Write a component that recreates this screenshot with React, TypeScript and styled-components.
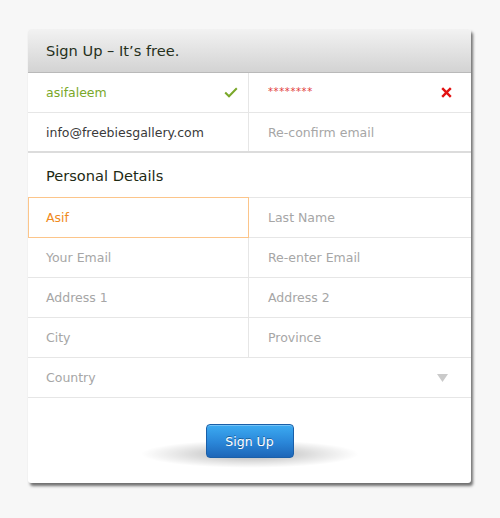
import React from 'react';
import styled, { createGlobalStyle } from 'styled-components';

const GlobalStyle = createGlobalStyle`
  html, body {
    margin: 0;
    padding: 0;
    background: #f7f7f7;
  }
  body {
    font-family: 'DejaVu Sans', 'Liberation Sans', sans-serif;
  }
`;

const Page = styled.div`
  padding: 29px 0 0 28px;
  height: 518px;
  box-sizing: border-box;
`;

const Card = styled.div`
  width: 443px;
  background: #fff;
  border-radius: 3px;
  box-shadow: 2px 3px 3px rgba(0, 0, 0, 0.55);
  overflow: hidden;
`;

const Header = styled.div`
  height: 43px;
  display: flex;
  align-items: center;
  padding-left: 18px;
  background: linear-gradient(#f2f2f2, #d3d3d3);
  border-bottom: 1px solid #b9b9b9;
  font-size: 14.6px;
  color: #26301c;
`;

const Row = styled.div<{ $thick?: boolean }>`
  display: grid;
  grid-template-columns: 221px 1fr;
  height: ${(p) => (p.$thick ? '38px' : '39px')};
  border-bottom: ${(p) => (p.$thick ? '2px solid #dcdcdc' : '1px solid #e6e6e6')};
`;

type Tone = 'green' | 'dark' | 'orange' | 'red' | 'muted';

const toneColor: Record<Tone, string> = {
  green: '#7aa82a',
  dark: '#3a3a3a',
  orange: '#f08a1c',
  red: '#e23a3a',
  muted: '#a6a6a6',
};

const Cell = styled.div<{ $tone?: Tone; $wide?: boolean }>`
  position: relative;
  display: flex;
  align-items: center;
  justify-content: space-between;
  padding: 0 10px 0 18px;
  font-size: 12.5px;
  grid-column: ${(p) => (p.$wide ? '1 / 3' : 'auto')};
  border-right: 1px solid #e6e6e6;
  box-sizing: border-box;
  color: ${(p) => toneColor[p.$tone ?? 'muted']};
  &:last-child {
    border-right: none;
    padding: ${(p) => (p.$wide ? '0 23px 0 18px' : '0 19px 0 19px')};
  }
`;

const FocusCell = styled(Cell)`
  z-index: 1;
  margin: -1px 0;
  padding-left: 17px;
  border: 1px solid #fcc58a;
`;

const Section = styled.div`
  height: 44px;
  display: flex;
  align-items: center;
  padding-left: 18px;
  font-size: 14.6px;
  color: #1e2a14;
  border-bottom: 1px solid #e6e6e6;
`;

const Stars = styled.span`
  font-size: 10px;
  letter-spacing: 0.6px;
  margin-top: -3px;
`;

const Footer = styled.div`
  height: 85px;
  display: flex;
  justify-content: center;
  padding-top: 26px;
  box-sizing: border-box;
`;

const ButtonWrap = styled.div`
  position: relative;
  &::before {
    content: '';
    position: absolute;
    left: -66px;
    right: -66px;
    top: 16px;
    height: 28px;
    border-radius: 50%;
    background: radial-gradient(
      ellipse at center,
      rgba(0, 0, 0, 0.3) 0%,
      rgba(0, 0, 0, 0.1) 45%,
      rgba(0, 0, 0, 0) 70%
    );
  }
`;

const Button = styled.button`
  position: relative;
  width: 88px;
  height: 34px;
  border: 1px solid #1a5fa8;
  border-radius: 4px;
  background: linear-gradient(#3cabf2, #2a86d8 55%, #1d66b8);
  color: #fff;
  font-family: 'DejaVu Sans', 'Liberation Sans', sans-serif;
  font-size: 12.5px;
  text-shadow: 0 -1px 0 rgba(0, 0, 0, 0.35);
  box-shadow: inset 0 1px 0 rgba(255, 255, 255, 0.3);
  cursor: pointer;
`;

const Check = () => (
  <svg width="14" height="11" viewBox="0 0 14 11">
    <path d="M1.2 5.5 L5 9.3 L12.8 1.2" fill="none" stroke="#7aa82a" strokeWidth="2" />
  </svg>
);

const Cross = () => (
  <svg width="11" height="11" viewBox="0 0 11 11">
    <path d="M1.2 1.2 L9.8 9.8 M9.8 1.2 L1.2 9.8" stroke="#e21212" strokeWidth="2.4" />
  </svg>
);

const Arrow = () => (
  <svg width="11" height="8" viewBox="0 0 11 8">
    <path d="M0 0 H11 L5.5 8 Z" fill="#cacaca" />
  </svg>
);

export default function App() {
  return (
    <Page>
      <GlobalStyle />
      <Card>
        <Header>Sign Up – It’s free.</Header>
        <Row>
          <Cell $tone="green">
            asifaleem
            <Check />
          </Cell>
          <Cell $tone="red">
            <Stars>********</Stars>
            <Cross />
          </Cell>
        </Row>
        <Row $thick>
          <Cell $tone="dark">info@freebiesgallery.com</Cell>
          <Cell>Re-confirm email</Cell>
        </Row>
        <Section>Personal Details</Section>
        <Row>
          <FocusCell $tone="orange">Asif</FocusCell>
          <Cell>Last Name</Cell>
        </Row>
        <Row>
          <Cell>Your Email</Cell>
          <Cell>Re-enter Email</Cell>
        </Row>
        <Row>
          <Cell>Address 1</Cell>
          <Cell>Address 2</Cell>
        </Row>
        <Row>
          <Cell>City</Cell>
          <Cell>Province</Cell>
        </Row>
        <Row>
          <Cell $wide>
            Country
            <Arrow />
          </Cell>
        </Row>
        <Footer>
          <ButtonWrap>
            <Button>Sign Up</Button>
          </ButtonWrap>
        </Footer>
      </Card>
    </Page>
  );
}
